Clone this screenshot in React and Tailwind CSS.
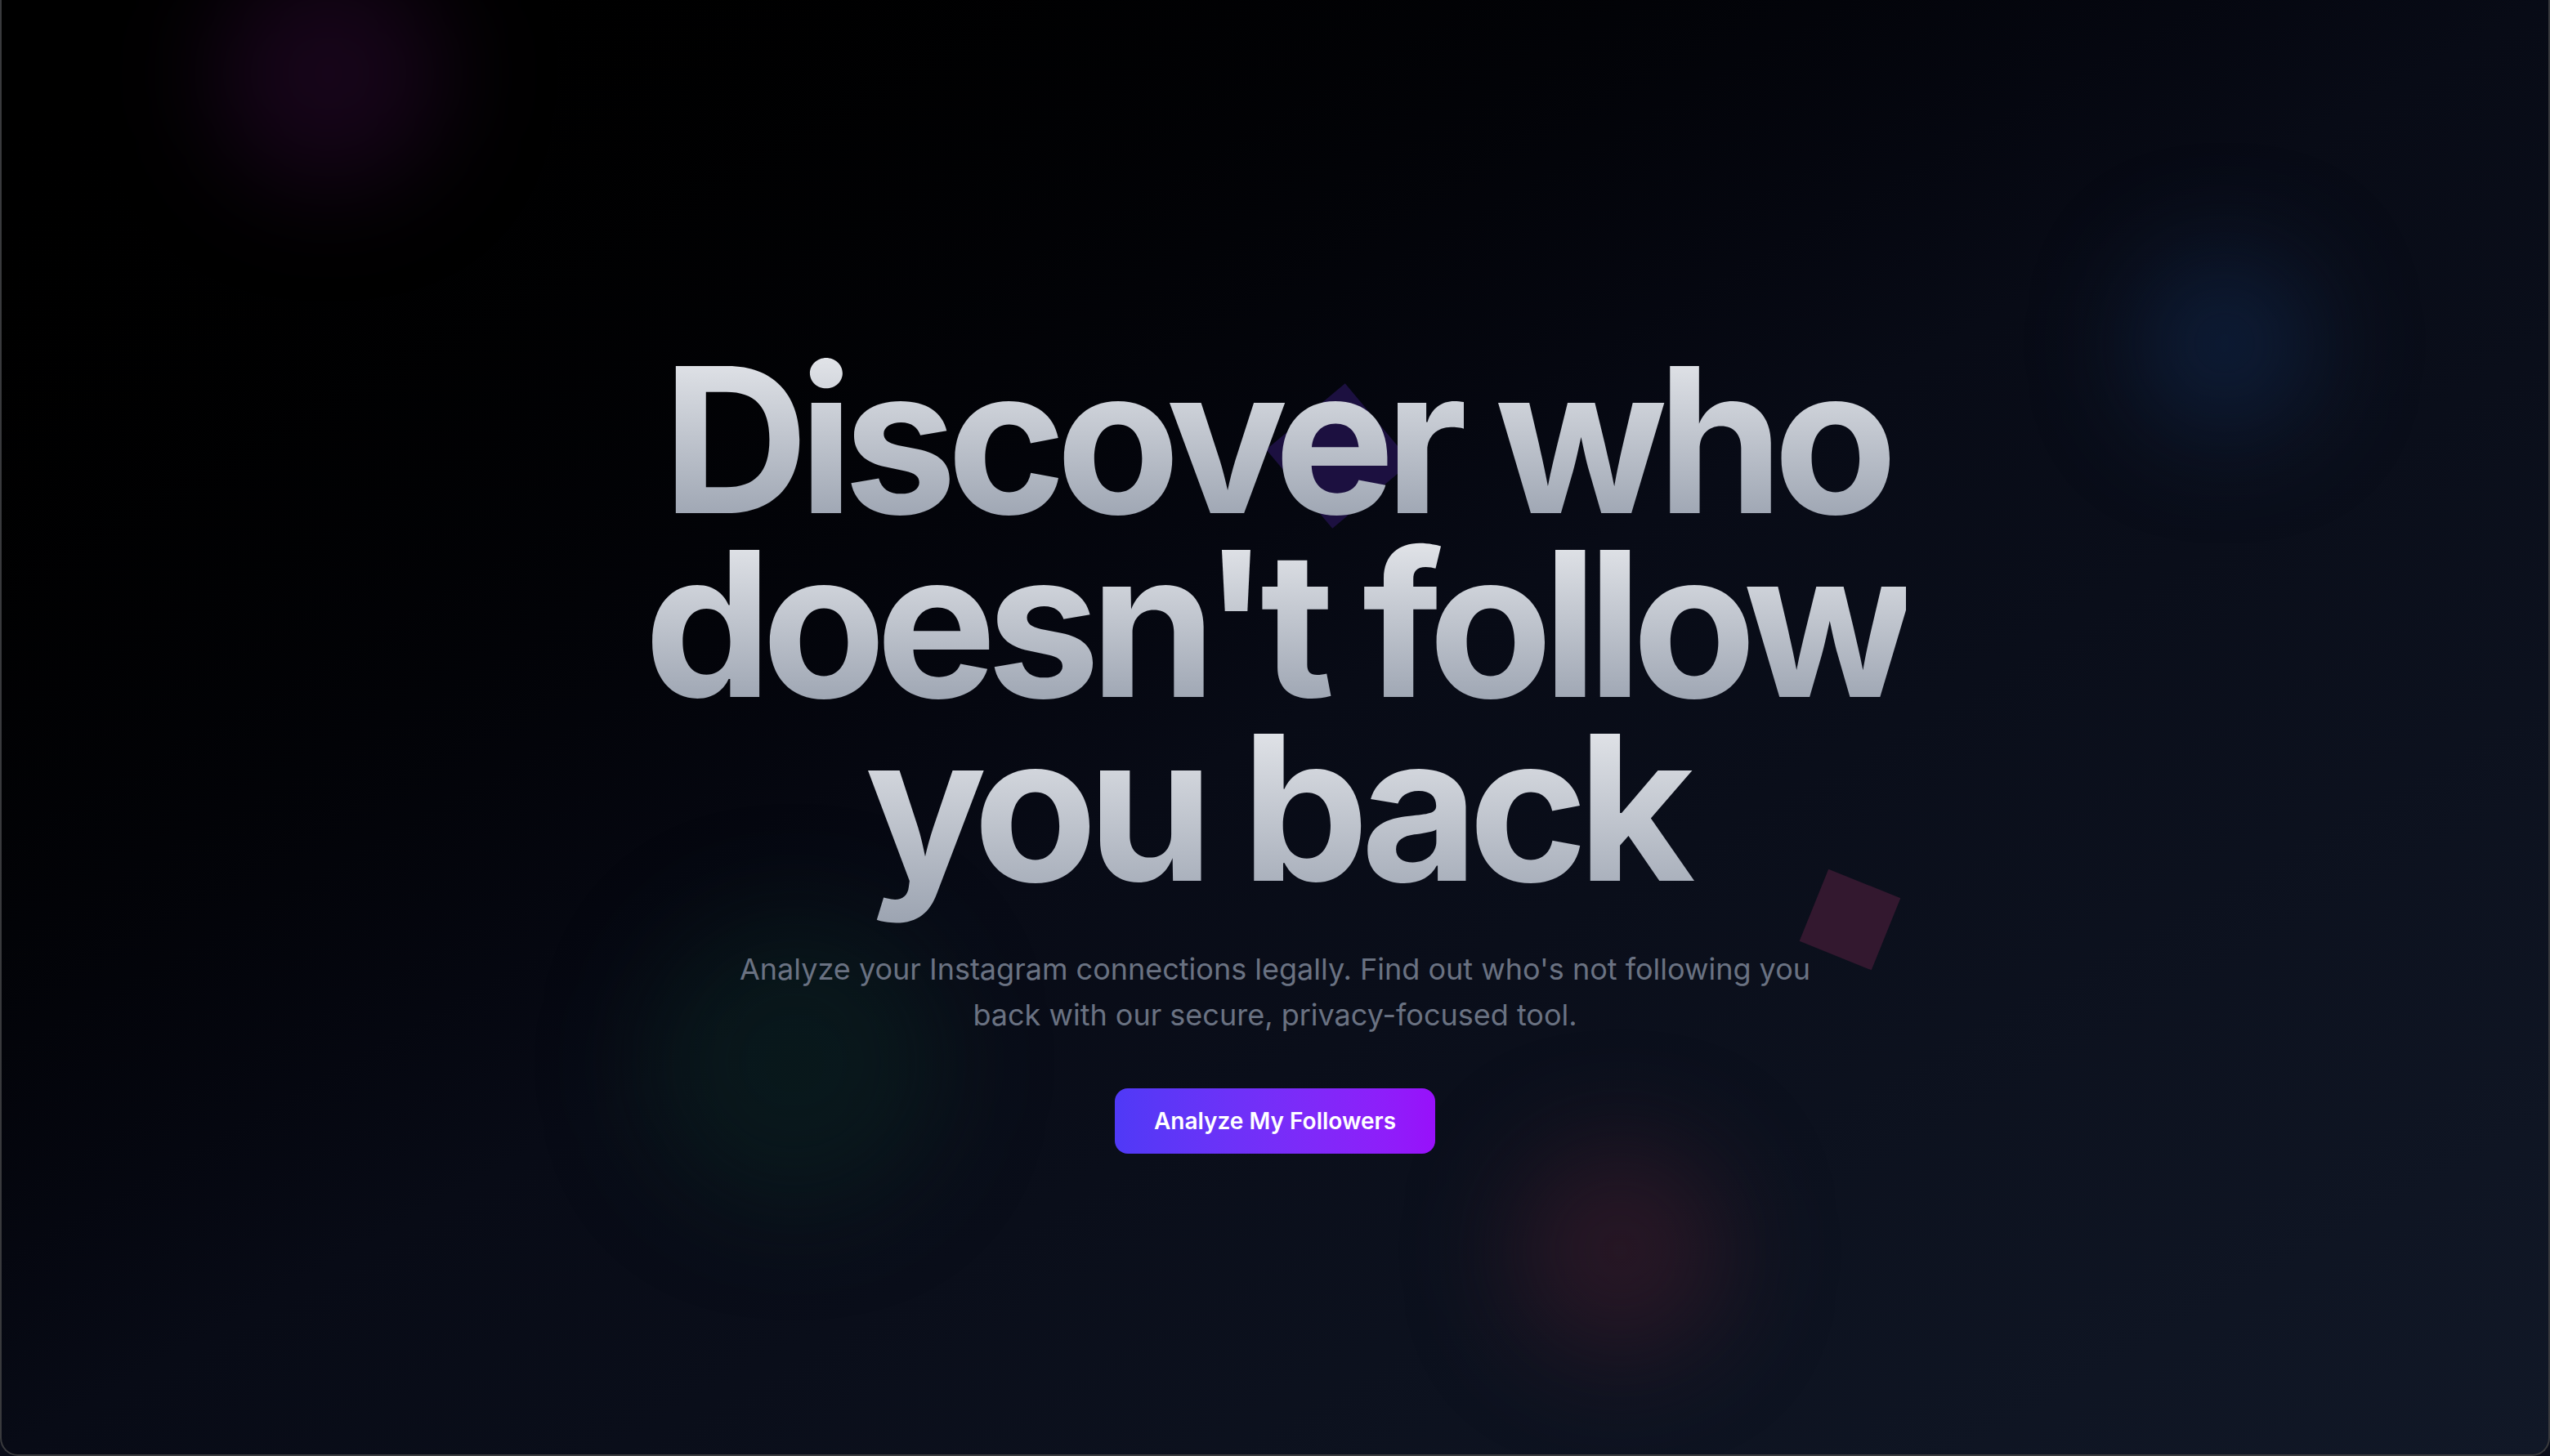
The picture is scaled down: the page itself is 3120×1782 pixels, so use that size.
import React from "react";

const Blob = ({ className }) => (
  <div className={`pointer-events-none absolute rounded-full blur-3xl ${className}`} />
);

const App = () => {
  return (
    <div className="h-screen w-full bg-[#0a0d19]">
      <div className="relative h-full w-full overflow-hidden rounded-b-[22px] border-x-2 border-b-2 border-[#393a3d] bg-gradient-to-br from-black via-[#080b16] to-[#111827]">
        {/* soft glows */}
        <Blob className="left-[260px] top-[-50px] h-[280px] w-[280px] bg-[#2a0a30]/55" />
        <Blob className="left-[2610px] top-[310px] h-[220px] w-[220px] bg-[#13305e]/45" />
        <Blob className="left-[790px] top-[1120px] h-[360px] w-[360px] bg-[#0b2a22]/40" />
        <Blob className="left-[1850px] top-[1400px] h-[260px] w-[260px] bg-[#3a1a2a]/60" />

        {/* floating shapes */}
        <div className="pointer-events-none absolute left-[1573px] top-[495px] h-[126px] w-[126px] rotate-[50deg] bg-[#1c1040]" />
        <div className="pointer-events-none absolute left-[2214px] top-[1078px] h-[95px] w-[95px] rotate-[22deg] bg-[#33182f]" />

        <div className="relative z-10 flex flex-col items-center pt-[426px] text-center" style={{ fontFamily: "Inter, 'Noto Sans', sans-serif" }}>
          <h1 className="text-[248px] font-bold leading-[225px] tracking-[-0.05em]">
            <span className="block bg-gradient-to-b from-gray-200 to-gray-400 bg-clip-text text-transparent">Discover who</span>
            <span className="block bg-gradient-to-b from-gray-200 to-gray-400 bg-clip-text text-transparent">doesn't follow</span>
            <span className="block bg-gradient-to-b from-gray-200 to-gray-400 bg-clip-text pb-[40px] -mb-[40px] text-transparent">you back</span>
          </h1>
          <p className="mt-[57px] max-w-[1380px] text-[36px] leading-[56px] text-gray-500">
            Analyze your Instagram connections legally. Find out who's not following you back with our secure, privacy-focused tool.
          </p>
          <button className="mt-[62px] rounded-2xl bg-gradient-to-r from-indigo-600 to-purple-600 px-12 py-5 text-[28px] font-semibold leading-[40px] text-white">
            Analyze My Followers
          </button>
        </div>
      </div>
    </div>
  );
};

export default App;
